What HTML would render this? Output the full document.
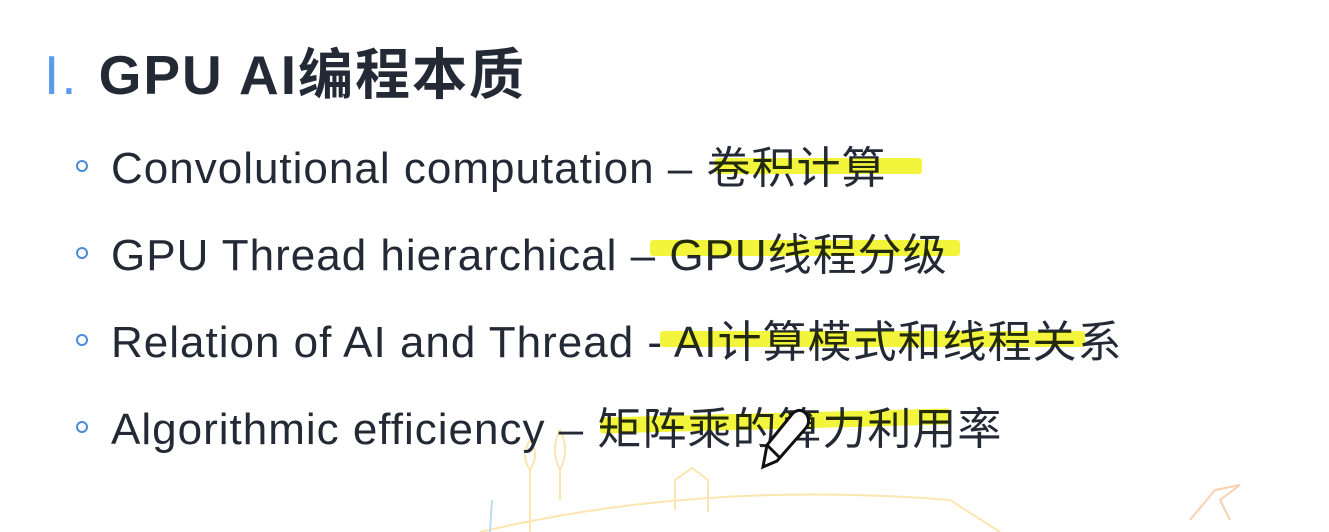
<!DOCTYPE html><html><head><meta charset="utf-8"><style>
body{margin:0;width:1329px;height:532px;background:#fff;overflow:hidden;position:relative;font-family:"Liberation Sans","Noto Sans CJK SC",sans-serif;color:#232a36}
.t{position:absolute;left:44px;top:30px;font-size:55px;font-weight:bold;white-space:nowrap;letter-spacing:2px}
.t .n{color:#5b9bea;font-weight:normal;margin-right:20px}
.l{position:absolute;left:111px;font-size:44px;white-space:nowrap;letter-spacing:1px}
.b{position:absolute;left:76px;width:8px;height:8px;border:2px solid #4a8ad8;border-radius:50%}
.h{position:absolute;background:rgb(242,245,60);mix-blend-mode:multiply;height:16px;border-radius:3px}
</style></head><body>
<svg style="position:absolute;left:0;top:0" width="1329" height="532">
<path d="M480 532 Q700 480 950 500 L1000 532" fill="none" stroke="#fbe6b0" stroke-width="2"/>
<path d="M530 532 L530 470 Q520 455 530 440 Q540 455 530 470" fill="none" stroke="#fbe6b0" stroke-width="2"/>
<path d="M560 500 L560 470 Q550 450 560 430 Q570 450 560 470" fill="none" stroke="#fbe6b0" stroke-width="2"/>
<path d="M675 510 L675 480 L692 468 L708 480 L708 512" fill="none" stroke="#fbe6b0" stroke-width="2"/>
<path d="M1190 520 L1215 490 L1240 485 L1220 500 L1230 520" fill="none" stroke="#f7d0b0" stroke-width="2"/>
<path d="M490 532 L492 500" stroke="#bcdcf0" stroke-width="2"/>
</svg>
<div class="t"><span class="n">I.</span>GPU AI编程本质</div>
<div class="b" style="top:160px"></div><div class="l" style="top:132px">Convolutional computation – 卷积计算</div>
<div class="b" style="top:247px"></div><div class="l" style="top:219px">GPU Thread hierarchical – GPU线程分级</div>
<div class="b" style="top:334px"></div><div class="l" style="top:306px">Relation of AI and Thread - AI计算模式和线程关系</div>
<div class="b" style="top:421px"></div><div class="l" style="top:393px">Algorithmic efficiency – 矩阵乘的算力利用率</div>
<div class="h" style="left:715px;top:158px;width:207px"></div>
<div class="h" style="left:650px;top:240px;width:310px"></div>
<div class="h" style="left:660px;top:331px;width:425px"></div>
<div class="h" style="left:600px;top:413px;width:350px;transform:rotate(-1.5deg)"></div>
<svg style="position:absolute;left:755px;top:405px" width="60" height="70"><path d="M8 62 L12 40 L38 8 Q46 2 52 10 Q56 18 50 24 L22 56 Z M12 40 L24 52" fill="#fff" stroke="#111" stroke-width="3"/></svg>
</body></html>
